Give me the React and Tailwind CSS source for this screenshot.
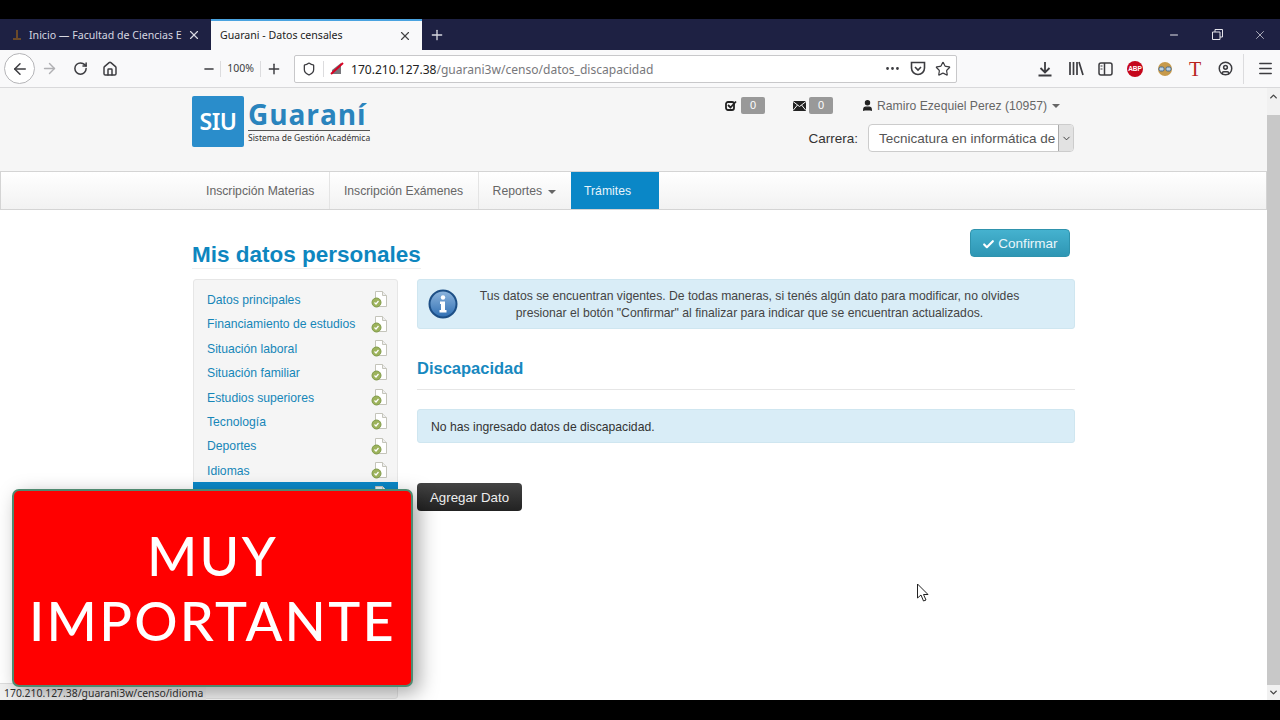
import { ArrowLeft, ArrowRight, RotateCw, Home, Minus, Plus, X, Shield, MoreHorizontal, Star, Menu, CircleUser, Check, User, ChevronDown, ChevronUp } from "lucide-react";

const sideItems = [
  "Datos principales",
  "Financiamiento de estudios",
  "Situación laboral",
  "Situación familiar",
  "Estudios superiores",
  "Tecnología",
  "Deportes",
  "Idiomas",
];

function FileCheck({ light }) {
  return (
    <svg width="17" height="18" viewBox="0 0 17 18" className="shrink-0">
      <path d="M4.5 1.5h7l4 4v11h-11z" fill={light ? "#e8f2f8" : "#fff"} stroke="#c4c4ba" />
      <path d="M11.5 1.5v4h4" fill="#eee" stroke="#c4c4ba" />
      {!light && <circle cx="5.5" cy="12.5" r="4.5" fill="#9db35c" stroke="#7f9a48" />}
      {!light && <path d="M3.5 12.5l1.5 1.5 2.5-3" fill="none" stroke="#fff" strokeWidth="1.2" />}
    </svg>
  );
}

function Tab({ active, children }) {
  return (
    <div
      className={
        active
          ? "w-[211px] h-full bg-[#f9f9fa] border-t-2 border-[#4aa3e0] flex items-center pl-[9px] pr-[10px] text-[#222]"
          : "w-[211px] h-full flex items-center pl-[11px] pr-[10px] text-[#d6d7e0]"
      }
    >
      {children}
    </div>
  );
}

function NavItem({ children, border = true }) {
  return (
    <div className={"h-full flex items-center pt-[2px] pl-[14px] text-[12.2px] text-[#666] " + (border ? "pr-[14.5px] border-r border-[#e4e4e4]" : "pr-[15px]")}>
      {children}
    </div>
  );
}

export default function App() {
  return (
    <div className="w-[1280px] h-[720px] bg-black overflow-hidden relative font-['Liberation_Sans',sans-serif]">
      <div className="h-[19px]" />

      {/* tab strip */}
      <div className="h-[31px] bg-[#1e2143] flex items-stretch text-[10.6px] font-['Noto_Sans',sans-serif]">
        <Tab>
          <svg width="12" height="12" viewBox="0 0 12 12" className="mr-[6px] shrink-0">
            <path d="M6 1v8M2 10h8" stroke="#6b4a2a" strokeWidth="2" />
          </svg>
          <span className="flex-1 pt-[2px] whitespace-nowrap">Inicio — Facultad de Ciencias E</span>
          <X size={14} className="shrink-0" />
        </Tab>
        <Tab active>
          <span className="flex-1 whitespace-nowrap">Guarani - Datos censales</span>
          <X size={14} className="text-[#444] shrink-0" />
        </Tab>
        <div className="w-[30px] flex items-center justify-center">
          <Plus size={16} className="text-[#d6d7e0]" />
        </div>
        <div className="flex-1 flex items-center justify-end text-[#e4e4ea]">
          <div className="w-[40px] flex justify-center"><Minus size={12} /></div>
          <div className="w-[46px] flex justify-center">
            <svg width="11" height="11" viewBox="0 0 11 11" fill="none" stroke="currentColor">
              <path d="M.5 3h7.500v7.500H.5zM3 3V.5h7.500V8H8" />
            </svg>
          </div>
          <div className="w-[40px] flex justify-center"><X size={14} strokeWidth={1.2} /></div>
        </div>
      </div>

      {/* toolbar */}
      <div className="h-[38px] bg-[#f9f9fa] border-b border-[#d9d9db] flex items-center text-[#3c3c40]">
        <div className="ml-[4px] w-[31px] h-[31px] rounded-full border border-[#b5b5b8] bg-white flex items-center justify-center">
          <ArrowLeft size={18} />
        </div>
        <ArrowRight size={17} className="ml-[6px] text-[#b0b0b3]" />
        <RotateCw size={15} strokeWidth={2.4} className="ml-[15px]" />
        <Home size={16} strokeWidth={2.2} className="ml-[14px]" />
        <Minus size={14} strokeWidth={2.4} className="ml-[84px]" />
        <div className="ml-[4px] w-[41px] h-[16px] border-x border-[#dcdcde] flex items-center justify-center text-[10.5px] font-['Noto_Sans',sans-serif]">100%</div>
        <Plus size={16} strokeWidth={2.2} className="ml-[5px]" />
        <div className="ml-[12px] w-[663px] h-[28px] bg-white border border-[#c8c8ca] rounded-[2px] flex items-center">
          <Shield size={14} strokeWidth={2.2} className="ml-[7px]" />
          <div className="ml-[7px] h-[16px] border-l border-[#dcdcde]" />
          <svg width="15" height="15" viewBox="0 0 15 15" className="ml-[6px]">
            <path d="M2 13V9l9-7v11z" fill="#77767b" />
            <path d="M1 13L13 2" stroke="#d70022" strokeWidth="2" />
          </svg>
          <div className="ml-[6px] pt-[3px] flex-1 text-[12.05px] font-['Noto_Sans',sans-serif] text-[#222] whitespace-nowrap">
            170.210.127.38<span className="text-[#77777b]">/guarani3w/censo/datos_discapacidad</span>
          </div>
          <MoreHorizontal size={17} className="mr-[9px]" />
          <svg width="16" height="15" viewBox="0 0 16 15" fill="none" stroke="currentColor" strokeWidth="1.6" className="mr-[9px]">
            <path d="M1.500 1.500h13V7a6.500 6.500 0 0 1-13 0z" />
            <path d="M5 6l3 3 3-3" />
          </svg>
          <Star size={16} strokeWidth={1.8} className="mr-[5px]" />
        </div>
        <svg width="16" height="16" viewBox="0 0 16 16" fill="none" stroke="currentColor" strokeWidth="1.8" className="ml-[80px]">
          <path d="M8 1v10M3.500 7l4.500 4.500L12.500 7M1.500 14.500h13" />
        </svg>
        <svg width="16" height="15" viewBox="0 0 16 15" fill="none" stroke="currentColor" strokeWidth="1.7" className="ml-[15px]">
          <path d="M2 1v13M5.500 1v13M9 1v13M11 1l4 13" />
        </svg>
        <svg width="15" height="14" viewBox="0 0 15 14" fill="none" stroke="currentColor" strokeWidth="1.5" className="ml-[14px]">
          <rect x="1" y="1" width="13" height="12" rx="2" />
          <path d="M6.500 1v12" />
          <path d="M2.500 4h2M2.500 7h2" strokeWidth="1" />
        </svg>
        <div className="ml-[14px] w-[16px] h-[16px] rounded-full bg-[#c5061b] text-white text-[6.5px] font-bold flex items-center justify-center">ABP</div>
        <svg width="16" height="16" viewBox="0 0 16 16" className="ml-[14px]">
          <circle cx="8" cy="8" r="7" fill="#c79a4a" />
          <rect x="2" y="6" width="5" height="4" rx="1.500" fill="#bcd2e4" stroke="#44688c" />
          <rect x="9" y="6" width="5" height="4" rx="1.500" fill="#bcd2e4" stroke="#44688c" />
        </svg>
        <div className="ml-[15px] w-[14px] text-[20px] leading-none text-[#b8231d] font-['Liberation_Serif',serif] text-center">T</div>
        <CircleUser size={15} strokeWidth={2.4} className="ml-[16px]" />
        <div className="ml-[10px] h-[30px] border-l border-[#dcdcde]" />
        <Menu size={17} strokeWidth={2.2} className="ml-[13px]" />
      </div>

      {/* page */}
      <div className="h-[612px] bg-white flex relative">
        <div className="w-[1267px]">
          <div className="h-[83px] bg-[#f6f6f6] flex pl-[192px]">
            <div className="w-[180px] h-[52px] mt-[7px] flex items-center">
              <div className="w-[52px] h-[51px] rounded-[2px] bg-[#2a8dcb] text-white font-['Noto_Sans',sans-serif] font-semibold text-[23px] tracking-[-0.5px] flex items-center justify-center">SIU</div>
              <div className="ml-[4px] flex flex-col">
                <div className="text-[#2a84bd] font-['Open_Sans',sans-serif] font-bold text-[28px] leading-[31px] tracking-[0.9px]">Guaraní</div>
                <div className="w-[122px] border-t border-[#555] text-[8.5px] leading-[13px] text-[#333] font-['Noto_Sans',sans-serif] whitespace-nowrap">Sistema de Gestión Académica</div>
              </div>
            </div>
            <div className="w-[702px] flex flex-col items-end">
              <div className="h-[21px] mt-[7px] flex items-center text-[12.2px] text-[#666] pr-[14px]">
                <svg width="13" height="11" viewBox="0 0 13 11" fill="none" stroke="#222" strokeWidth="1.8">
                  <rect x="1" y="2" width="8" height="8" rx="2" />
                  <path d="M3 5l2.500 2.500L11 1.500" />
                </svg>
                <span className="ml-[3px] w-[24px] h-[17px] bg-[#999] rounded-[2px] text-white text-[11px] flex items-center justify-center">0</span>
                <svg width="13" height="10" viewBox="0 0 13 10" className="ml-[28px]">
                  <rect width="13" height="10" fill="#222" />
                  <path d="M0 .5l6.500 5 6.500-5M0 9.500l4.500-5.500M13 9.500L8.500 4" fill="none" stroke="#f6f6f6" />
                </svg>
                <span className="ml-[3px] w-[24px] h-[17px] bg-[#999] rounded-[2px] text-white text-[11px] flex items-center justify-center">0</span>
                <User size={13} fill="#222" stroke="#222" className="ml-[28px]" />
                <span className="ml-[3px] pt-[2px]">Ramiro Ezequiel Perez (10957)</span>
                <span className="ml-[5px] border-x-[4px] border-t-[4px] border-x-transparent border-t-[#666]" />
              </div>
              <div className="mt-[8px] flex items-center">
                <span className="pt-[2px] text-[13.5px] text-[#333] mr-[10px]">Carrera:</span>
                <div className="w-[206px] h-[28px] bg-white border border-[#ccc] rounded-[4px] flex items-center overflow-hidden text-[13.5px] text-[#555]">
                  <span className="pt-[2px] pl-[10px] w-[189px] whitespace-nowrap">Tecnicatura en informática de</span>
                  <div className="flex-1 h-full bg-[#e2e2e2] border-l border-[#aaa] flex items-center justify-center">
                    <ChevronDown size={11} className="text-[#333]" />
                  </div>
                </div>
              </div>
            </div>
          </div>

          <div className="h-[39px] bg-gradient-to-b from-white to-[#f2f2f2] border border-[#d4d4d4] flex pl-[191px]">
            <NavItem>Inscripción Materias</NavItem>
            <NavItem>Inscripción Exámenes</NavItem>
            <NavItem border={false}>
              Reportes
              <span className="ml-[6px] border-x-[4px] border-t-[4px] border-x-transparent border-t-[#666]" />
            </NavItem>
            <div className="w-[88px] h-full bg-[#0a87c7] text-[#e8f4fb] text-[12.2px] flex items-center pt-[2px] pl-[13px]">Trámites</div>
          </div>

          <div className="pl-[192px] w-[1076px]">
            <div className="h-[69px] flex justify-between pr-[6px]">
              <h1 className="mt-[31px] h-[28px] border-b border-[#eee] text-[#0e86bf] text-[22.5px] leading-[27px] font-bold">Mis datos personales</h1>
              <button className="mt-[19px] pt-[2px] w-[100px] h-[28px] rounded-[4px] border border-[#2f93ad] bg-gradient-to-b from-[#45b2cf] to-[#2e96b4] text-[#eaf6fa] text-[13.5px] flex items-center justify-center">
                <Check size={13} strokeWidth={4} className="mr-[3px] text-white" />
                Confirmar
              </button>
            </div>

            <div className="flex">
              <div className="ml-[1px] w-[205px] h-[420px] bg-[#f5f5f5] border border-[#e6e6e6] rounded-[3px] pt-[7px] shrink-0">
                {sideItems.map((s) => (
                  <div key={s} className="h-[24.4px] flex items-center justify-between pl-[13px] pr-[9px] text-[12.2px] text-[#1686b8]">
                    <span className="pt-[2px]">{s}</span>
                    <FileCheck />
                  </div>
                ))}
                <div className="h-[24px] -mx-[1px] bg-[#0a87c7] flex items-center justify-end pr-[10px]">
                  <FileCheck light />
                </div>
              </div>

              <div className="ml-[19px] w-[658px]">
                <div className="h-[50px] bg-[#d9edf7] border border-[#cfe6f0] rounded-[3px] flex items-center">
                  <svg width="30" height="30" viewBox="0 0 30 30" className="ml-[10px] shrink-0">
                    <defs>
                      <linearGradient id="infoFill" x1="0" y1="0" x2="0" y2="1">
                        <stop offset="0" stopColor="#8fb6de" />
                        <stop offset="1" stopColor="#2f6fb3" />
                      </linearGradient>
                    </defs>
                    <circle cx="15" cy="15" r="13.5" fill="url(#infoFill)" stroke="#1d4f86" strokeWidth="2" />
                    <circle cx="15" cy="8.5" r="2.2" fill="#fff" />
                    <path d="M12 12.500h5v8.500h1.500v2.500h-7V21H13v-6h-1z" fill="#fff" />
                  </svg>
                  <p className="flex-1 pt-[2px] text-center text-[12.2px] leading-[17px] text-[#444] pr-[33px]">
                    Tus datos se encuentran vigentes. De todas maneras, si tenés algún dato para modificar, no olvides presionar el botón "Confirmar" al finalizar para indicar que se encuentran actualizados.
                  </p>
                </div>
                <h2 className="mt-[27px] h-[33px] text-[#1788bf] text-[16.5px] leading-[24px] font-bold">Discapacidad</h2>
                <div className="h-px bg-[#e6e6e6]" />
                <div className="mt-[19px] h-[34px] bg-[#d9edf7] border border-[#cfe6f0] rounded-[3px] flex items-center pt-[2px] pl-[13px] text-[12.2px] text-[#333]">
                  No has ingresado datos de discapacidad.
                </div>
                <button className="mt-[40px] pt-[2px] w-[105px] h-[28px] rounded-[4px] bg-gradient-to-b from-[#444] to-[#222] text-[#eee] text-[13.3px] flex items-center justify-center">
                  Agregar Dato
                </button>
              </div>
            </div>
          </div>
        </div>

        <div className="w-[13px] bg-[#f1f1f1] flex flex-col">
          <div className="h-[27px] flex items-start pt-[3px] justify-center">
            <ChevronUp size={11} strokeWidth={3} className="text-[#444]" />
          </div>
          <div className="h-[570px] bg-[#c8c8c8]" />
          <div className="h-[15px] flex items-center justify-center">
            <ChevronDown size={11} strokeWidth={3} className="text-[#444]" />
          </div>
        </div>

        {/* mouse pointer */}
        <svg width="13" height="20" viewBox="0 0 13 20" className="absolute left-[916px] top-[495px]">
          <path d="M1.500 1v14l3.500-3 2.500 6 2.500-1-2.500-5.500H12z" fill="#fff" stroke="#222" />
        </svg>

        {/* status tooltip */}
        <div className="absolute left-0 bottom-0 h-[17px] w-[206px] bg-[#f1f1f1] border-t border-[#ddd] pl-[4px] text-[10.4px] leading-[18px] text-[#333] font-['Noto_Sans',sans-serif] whitespace-nowrap">
          170.210.127.38/guarani3w/censo/idioma
        </div>
      </div>

      {/* red banner over the video */}
      <div className="absolute left-[12px] top-[489px] w-[401px] h-[198px] bg-[#ff0000] border-2 border-[#4f8a70] rounded-[7px] shadow-[6px_6px_20px_rgba(0,0,0,0.35)] flex items-center justify-center text-center text-white font-['Lato',sans-serif] font-medium text-[54px] leading-[65px] tracking-[2.3px]">
        <div>MUY<br />IMPORTANTE</div>
      </div>
    </div>
  );
}
